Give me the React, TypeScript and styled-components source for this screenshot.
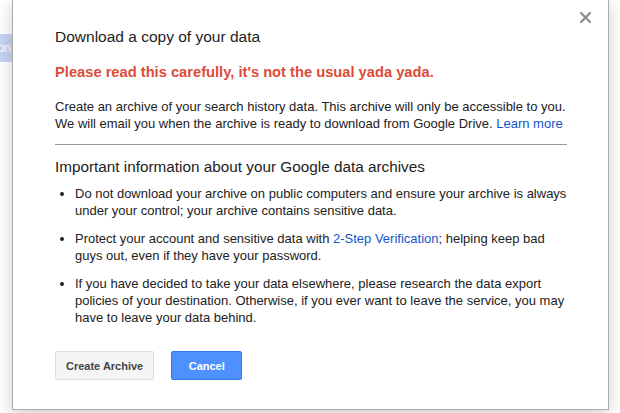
import React from 'react';
import styled, { createGlobalStyle } from 'styled-components';

const GlobalStyle = createGlobalStyle`
  html, body {
    margin: 0;
    padding: 0;
    background: #ffffff;
  }
  body {
    font-family: 'Liberation Sans', Arial, sans-serif;
    color: #222;
  }
`;

const App: React.FC = () => {
  const bullets: React.ReactNode[] = [
    'Do not download your archive on public computers and ensure your archive is always under your control; your archive contains sensitive data.',
    <>
      Protect your account and sensitive data with <Link href="#">2-Step Verification</Link>; helping keep bad
      guys out, even if they have your password.
    </>,
    'If you have decided to take your data elsewhere, please research the data export policies of your destination. Otherwise, if you ever want to leave the service, you may have to leave your data behind.',
  ];

  return (
    <Page>
      <GlobalStyle />
      <SideStrip>
        <Chip>on</Chip>
      </SideStrip>
      <Dialog>
        <CloseButton aria-label="Close">
          <svg width="11" height="11" viewBox="0 0 11 11">
            <path d="M1 1 L10 10 M10 1 L1 10" stroke="#8c8c8c" strokeWidth="2.2" strokeLinecap="square" />
          </svg>
        </CloseButton>
        <Title>Download a copy of your data</Title>
        <Warning>Please read this carefully, it's not the usual yada yada.</Warning>
        <Body>
          Create an archive of your search history data. This archive will only be accessible to you.
          <br />
          We will email you when the archive is ready to download from Google Drive. <Link href="#">Learn more</Link>
        </Body>
        <Rule />
        <Heading>Important information about your Google data archives</Heading>
        <InfoList>
          {bullets.map((item, index) => (
            <InfoItem key={index}>{item}</InfoItem>
          ))}
        </InfoList>
        <ButtonRow>
          <Button>Create Archive</Button>
          <Button $primary>Cancel</Button>
        </ButtonRow>
      </Dialog>
    </Page>
  );
};

export default App;

const Page = styled.div`
  display: flex;
  align-items: flex-start;
  height: 413px;
  overflow: hidden;
  background: #fff;
`;

const SideStrip = styled.div`
  width: 12px;
  flex-shrink: 0;
  padding-top: 34px;
  overflow: hidden;
`;

const Chip = styled.div`
  display: flex;
  justify-content: flex-end;
  align-items: center;
  height: 28px;
  padding-right: 1px;
  background: #c6d5f1;
  color: #fff;
  font-size: 12px;
`;

const Dialog = styled.div`
  position: relative;
  box-sizing: border-box;
  width: 597px;
  height: 410px;
  flex-shrink: 0;
  padding: 27px 41px 0 42px;
  background: #fff;
  border: 1px solid #acacac;
  border-top: none;
  box-shadow: 0 4px 16px rgba(0, 0, 0, 0.2);
`;

const CloseButton = styled.div`
  position: absolute;
  top: 12px;
  right: 17px;
  width: 11px;
  height: 11px;
  display: flex;
  cursor: pointer;
`;

const Title = styled.h1`
  margin: 0;
  font-size: 15.5px;
  line-height: 20px;
  font-weight: normal;
  color: #222;
`;

const Warning = styled.div`
  margin-top: 16px;
  font-size: 14.7px;
  line-height: 18px;
  font-weight: bold;
  color: #dd4b39;
`;

const Body = styled.p`
  margin: 17px 0 0;
  font-size: 13px;
  line-height: 17px;
`;

const Link = styled.a`
  color: #1155cc;
  text-decoration: none;
`;

const Rule = styled.hr`
  margin: 12px 0 0;
  border: none;
  border-top: 1px solid #9a9a9a;
  height: 0;
`;

const Heading = styled.h2`
  margin: 12px 0 0;
  font-size: 15.3px;
  line-height: 20px;
  font-weight: normal;
  color: #222;
`;

const InfoList = styled.ul`
  margin: 8px 0 0;
  padding-left: 20px;
  font-size: 13px;
  line-height: 17px;
`;

const InfoItem = styled.li`
  margin-bottom: 11px;
  &:last-child {
    margin-bottom: 0;
  }
`;

const ButtonRow = styled.div`
  display: flex;
  gap: 17px;
  margin-top: 25px;
`;

const Button = styled.button<{ $primary?: boolean }>`
  box-sizing: border-box;
  height: 29px;
  min-width: ${(p) => (p.$primary ? '71px' : '0')};
  padding: 0 10px;
  border-radius: 2px;
  font-family: 'Liberation Sans', Arial, sans-serif;
  font-size: 11px;
  font-weight: bold;
  cursor: pointer;
  border: 1px solid ${(p) => (p.$primary ? '#3079ed' : '#dcdcdc')};
  background: ${(p) => (p.$primary ? '#4d90fe' : '#f5f5f5')};
  color: ${(p) => (p.$primary ? '#fff' : '#444')};
`;
